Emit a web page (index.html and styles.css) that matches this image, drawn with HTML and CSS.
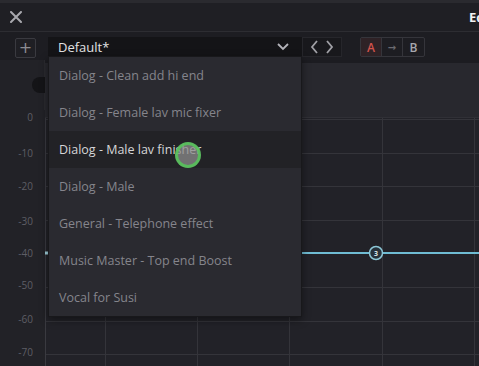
FILE: index.html
```html
<!DOCTYPE html>
<html lang="en">
<head>
    <meta charset="UTF-8">
    <title>Equalizer</title>
    <link rel="stylesheet" href="styles.css">
</head>
<body>
    <div class="window">
        <header class="titlebar">
            <button class="close">
                <svg width="12" height="12" viewBox="0 0 12 12"><path d="M1 1 L11 11 M11 1 L1 11" stroke="#a8a8ae" stroke-width="2" stroke-linecap="round"/></svg>
            </button>
            <span class="title">Equalizer</span>
        </header>

        <div class="toolbar">
            <button class="add">+</button>
            <div class="preset">
                <span>Default*</span>
                <svg width="12" height="8" viewBox="0 0 12 8"><path d="M1 1 L6 6 L11 1" fill="none" stroke="#b4b4ba" stroke-width="1.8"/></svg>
            </div>
            <div class="nav">
                <svg width="9" height="14" viewBox="0 0 9 14"><path d="M7 1 L2 7 L7 13" fill="none" stroke="#a0a0a6" stroke-width="1.8"/></svg>
                <svg width="9" height="14" viewBox="0 0 9 14"><path d="M2 1 L7 7 L2 13" fill="none" stroke="#a0a0a6" stroke-width="1.8"/></svg>
            </div>
            <div class="ab">
                <span class="ab-a">A</span>
                <span class="ab-arrow">&rarr;</span>
                <span class="ab-b">B</span>
            </div>
        </div>

        <div class="graph-head">
            <div class="axis-head"><span class="pill"></span></div>
            <div class="band-head"></div>
        </div>

        <svg class="plot" width="479" height="256" viewBox="0 0 479 256">
            <rect x="45" y="8" width="434" height="248" fill="#222228"/>
            <g stroke="#34343a" stroke-width="1">
                <line x1="45" y1="9.5" x2="479" y2="9.5"/>
                <line x1="45" y1="43.5" x2="479" y2="43.5"/>
                <line x1="45" y1="76.5" x2="479" y2="76.5"/>
                <line x1="45" y1="110.5" x2="479" y2="110.5"/>
                <line x1="45" y1="177.5" x2="479" y2="177.5"/>
                <line x1="45" y1="211.5" x2="479" y2="211.5"/>
                <line x1="45" y1="244.5" x2="479" y2="244.5"/>
                <line x1="105.5" y1="8" x2="105.5" y2="256"/>
                <line x1="197.5" y1="8" x2="197.5" y2="256"/>
                <line x1="289.5" y1="8" x2="289.5" y2="256"/>
                <line x1="382.5" y1="8" x2="382.5" y2="256"/>
                <line x1="474.5" y1="8" x2="474.5" y2="256"/>
            </g>
            <line x1="45.5" y1="8" x2="45.5" y2="256" stroke="#3a3a40"/>
            <g class="axis-labels" fill="#5e5e65" font-size="10" text-anchor="end">
                <text x="33" y="11">0</text>
                <text x="33" y="47">-10</text>
                <text x="33" y="80">-20</text>
                <text x="33" y="115">-30</text>
                <text x="33" y="147">-40</text>
                <text x="33" y="179">-50</text>
                <text x="33" y="213">-60</text>
                <text x="33" y="246">-70</text>
            </g>
            <line x1="46" y1="143" x2="479" y2="143" stroke="#6fbcd3" stroke-width="2"/>
            <rect x="45" y="141.5" width="3" height="3" fill="#9fd0dc"/>
            <circle cx="376" cy="143" r="6.5" fill="#27313a" stroke="#8cc6d6" stroke-width="1.5"/>
            <text x="376" y="146" fill="#d8e6ea" font-size="7" font-weight="bold" text-anchor="middle">3</text>
        </svg>

        <ul class="menu">
            <li>Dialog - Clean add hi end</li>
            <li>Dialog - Female lav mic fixer</li>
            <li class="active">Dialog - Male lav finisher</li>
            <li>Dialog - Male</li>
            <li>General - Telephone effect</li>
            <li>Music Master - Top end Boost</li>
            <li>Vocal for Susi</li>
        </ul>

        <span class="cursor"></span>
    </div>
</body>
</html>
```

FILE: styles.css
```css
* {
    box-sizing: border-box;
}

body {
    margin: 0;
    background: #1c1c21;
    font-family: 'Open Sans', 'Noto Sans', sans-serif;
    overflow: hidden;
}

.window {
    position: relative;
    width: 479px;
    height: 366px;
    overflow: hidden;
}

.titlebar {
    display: flex;
    align-items: center;
    height: 32px;
    background: #1f1f24;
    border-top: 3px solid #2a2a2f;
    border-bottom: 1px solid #2d2d32;
}

.close {
    display: flex;
    padding: 0;
    margin-left: 10px;
    width: 12px;
    background: none;
    border: none;
}

.title {
    margin-left: 447px;
    white-space: nowrap;
    color: #f2f2f2;
    font-size: 13px;
    font-weight: 700;
}

.toolbar {
    display: flex;
    align-items: flex-start;
    height: 28px;
    padding: 5px 0 0 15px;
    background: #1d1d22;
}

.add {
    width: 21px;
    height: 20px;
    margin-top: 1px;
    padding: 0;
    background: #1f1f24;
    border: 1px solid #3a3a40;
    border-radius: 2px;
    color: #8c8c92;
    font-size: 16px;
    line-height: 16px;
    font-family: 'DejaVu Sans', sans-serif;
}

.preset {
    display: flex;
    align-items: center;
    justify-content: space-between;
    width: 254px;
    height: 19px;
    margin-left: 12px;
    padding: 0 13px 0 10px;
    background: #141417;
    color: #e2e2e4;
    font-size: 13px;
}

.nav {
    display: flex;
    align-items: center;
    justify-content: space-around;
    width: 40px;
    height: 20px;
    padding: 0 4px;
    background: #18181c;
    border: 1px solid #26262b;
}

.ab {
    display: flex;
    margin-left: 18px;
    height: 20px;
    border: 1px solid #35353b;
    border-radius: 2px;
}

.ab span {
    display: flex;
    align-items: center;
    justify-content: center;
    width: 21px;
    font-size: 12px;
    font-weight: 600;
}

.ab-a {
    background: #2e2226;
    color: #d2524c;
    border-right: 1px solid #35353b;
}

.ab-arrow {
    color: #6a6a70;
    border-right: 1px solid #35353b;
    font-family: 'DejaVu Sans', sans-serif;
    font-size: 10px !important;
}

.ab-b {
    color: #a8a8ae;
}

.graph-head {
    display: flex;
    height: 50px;
}

.axis-head {
    width: 45px;
    background: #222227;
    border-right: 1px solid #2a2a2f;
    padding-top: 17px;
}

.pill {
    display: block;
    width: 24px;
    height: 16px;
    margin-left: 32px;
    background: #141417;
    border-radius: 8px;
}

.band-head {
    flex: 1;
    margin-top: 3px;
    margin-bottom: -8px;
    background: #28282e;
    border-bottom: 1px solid #303036;
}

.plot {
    display: block;
    background: #222227;
}

.menu {
    position: absolute;
    left: 48px;
    top: 56px;
    width: 254px;
    margin: 0;
    padding: 0;
    list-style: none;
    background: #2a2a30;
    border: 1px solid #18181b;
    box-shadow: 0 3px 8px rgba(0, 0, 0, 0.45);
}

.menu li {
    height: 37px;
    padding-left: 10px;
    line-height: 37px;
    color: #85858c;
    font-size: 12.5px;
}

.menu li.active {
    background: #222226;
    color: #d6d6d8;
}

.cursor {
    position: absolute;
    left: 175px;
    top: 142px;
    width: 26px;
    height: 26px;
    border-radius: 50%;
    border: 3px solid rgba(86, 200, 90, 0.85);
    background: rgba(140, 140, 140, 0.75);
}
```
